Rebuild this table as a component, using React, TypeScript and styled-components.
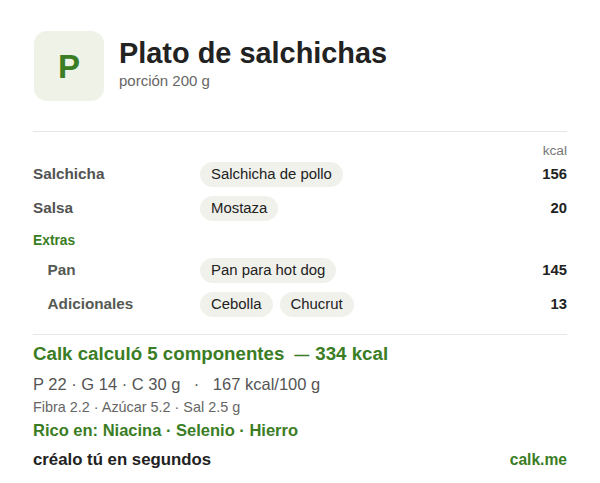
import React from "react";
import styled, { createGlobalStyle } from "styled-components";

const Global = createGlobalStyle`
  html, body { margin: 0; padding: 0; background: #fff; }
  body { font-family: "Liberation Sans", Arial, sans-serif; }
`;

const GREEN = "#3a7d24";

const Card = styled.div`
  width: 600px;
  box-sizing: border-box;
  padding: 31px 33px 0 33px;
  background: #fff;
`;

const Header = styled.div`
  display: flex;
  align-items: flex-start;
  gap: 15px;
  padding-bottom: 30px;
  border-bottom: 1px solid #e6e6e6;
`;

const Logo = styled.div`
  flex: none;
  width: 70px;
  height: 70px;
  margin-left: 1px;
  border-radius: 13px;
  background: #eef2e7;
  display: flex;
  align-items: center;
  justify-content: center;
  color: ${GREEN};
  font-weight: 700;
  font-size: 33px;
  line-height: 1;
`;

const TitleBlock = styled.div`
  display: flex;
  flex-direction: column;
  gap: 3px;
  margin-top: 6px;
`;

const Title = styled.div`
  font-size: 28.9px;
  font-weight: 700;
  color: #222;
  line-height: 32px;
`;

const Sub = styled.div`
  font-size: 15px;
  color: #666;
  line-height: 18px;
`;

const UnitRow = styled.div`
  text-align: right;
  font-size: 13.7px;
  color: #777;
  margin: 11.5px 0 -0.5px;
  line-height: 14px;
`;

const Row = styled.div`
  display: grid;
  grid-template-columns: 167px 1fr auto;
  align-items: center;
  height: 34px;
`;

const Label = styled.div<{ $indent?: boolean }>`
  font-size: 15.3px;
  font-weight: 700;
  color: ${(p) => (p.$indent ? "#555a52" : "#525252")};
  padding-left: ${(p) => (p.$indent ? "14.5px" : "0")};
`;

const Chips = styled.div`
  display: flex;
  gap: 7px;
`;

const Chip = styled.span`
  display: inline-flex;
  align-items: center;
  height: 25px;
  padding: 0 11px;
  border-radius: 13px;
  background: #f1f1ec;
  font-size: 14.9px;
  color: #222;
`;

const Kcal = styled.div`
  font-size: 14.8px;
  font-weight: 700;
  color: #222;
  text-align: right;
`;

const Section = styled.div`
  font-size: 13.8px;
  font-weight: 700;
  color: ${GREEN};
  line-height: 16px;
  padding: 8px 0 4px;
`;

const Rows = styled.div`
  padding-bottom: 13px;
  border-bottom: 1px solid #e6e6e6;
`;

const Summary = styled.div`
  display: flex;
  flex-direction: column;
  padding-top: 8px;
`;

const Total = styled.div`
  font-size: 18.7px;
  font-weight: 700;
  color: ${GREEN};
  line-height: 22px;
`;

const Dash = styled.span`
  font-size: 15px;
  margin: 0 6px 0 10px;
`;

const Macros = styled.div`
  font-size: 16.5px;
  color: #555;
  line-height: 20px;
  margin-top: 7.5px;
`;

const Sep = styled.span`
  margin: 0 13.5px;
`;

const Micro = styled.div`
  font-size: 14.4px;
  color: #666;
  line-height: 18px;
  margin-top: 4.5px;
`;

const Rich = styled.div`
  font-size: 16.5px;
  font-weight: 700;
  color: ${GREEN};
  line-height: 20px;
  margin-top: 3.5px;
`;

const Footer = styled.div`
  display: flex;
  justify-content: space-between;
  align-items: baseline;
  margin-top: 10px;
  font-weight: 700;
  line-height: 20px;
`;

const Cta = styled.span`
  color: #222;
  font-size: 16.8px;
`;

const Brand = styled.span`
  color: ${GREEN};
  font-size: 15.6px;
`;

type Item = { label: string; chips: string[]; kcal: number; indent?: boolean };

const main: Item[] = [
  { label: "Salchicha", chips: ["Salchicha de pollo"], kcal: 156 },
  { label: "Salsa", chips: ["Mostaza"], kcal: 20 },
];
const extras: Item[] = [
  { label: "Pan", chips: ["Pan para hot dog"], kcal: 145, indent: true },
  { label: "Adicionales", chips: ["Cebolla", "Chucrut"], kcal: 13, indent: true },
];

const ItemRow = ({ item }: { item: Item }) => (
  <Row>
    <Label $indent={item.indent}>{item.label}</Label>
    <Chips>
      {item.chips.map((c) => (
        <Chip key={c}>{c}</Chip>
      ))}
    </Chips>
    <Kcal>{item.kcal}</Kcal>
  </Row>
);

export default function App() {
  return (
    <>
      <Global />
      <Card>
        <Header>
          <Logo>P</Logo>
          <TitleBlock>
            <Title>Plato de salchichas</Title>
            <Sub>porción 200 g</Sub>
          </TitleBlock>
        </Header>
        <UnitRow>kcal</UnitRow>
        <Rows>
          {main.map((i) => (
            <ItemRow key={i.label} item={i} />
          ))}
          <Section>Extras</Section>
          {extras.map((i) => (
            <ItemRow key={i.label} item={i} />
          ))}
        </Rows>
        <Summary>
          <Total>
            Calk calculó 5 componentes<Dash>—</Dash>334 kcal
          </Total>
          <Macros>
            P 22 · G 14 · C 30 g<Sep>·</Sep>167 kcal/100 g
          </Macros>
          <Micro>Fibra 2.2 · Azúcar 5.2 · Sal 2.5 g</Micro>
          <Rich>Rico en: Niacina · Selenio · Hierro</Rich>
          <Footer>
            <Cta>créalo tú en segundos</Cta>
            <Brand>calk.me</Brand>
          </Footer>
        </Summary>
      </Card>
    </>
  );
}
